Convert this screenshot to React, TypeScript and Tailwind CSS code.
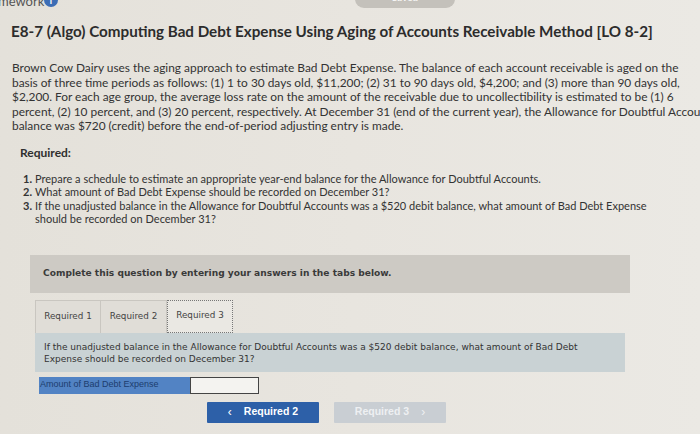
export default function App() {
  return (
    <div className="w-[700px] h-[434px] overflow-hidden bg-gradient-to-r from-[#e4e1da] via-[#e8e5df] to-[#ebe9e4] text-[#2f2f2f] font-['Lato',sans-serif]">
      {/* cut-off top bar */}
      <div className="relative h-[10px] overflow-hidden">
        <span className="absolute left-[-2px] top-[-8px] text-[13px] text-[#555]">mework</span>
        <span className="absolute left-[44px] top-[-7px] flex h-[14px] w-[14px] items-center justify-center rounded-full bg-[#3c6db5] text-[9px] font-bold leading-none text-white">i</span>
        <span className="absolute left-[355px] top-[-10px] h-[18px] w-[100px] rounded-full bg-[#c4c1bb] text-center text-[10px] leading-[14px] text-white">Saved</span>
      </div>

      <h1 className="ml-[11px] mt-[11px] whitespace-nowrap text-[15.2px] font-bold leading-[20px] text-[#2c2c2c]">
        E8-7 (Algo) Computing Bad Debt Expense Using Aging of Accounts Receivable Method [LO 8-2]
      </h1>

      <p className="ml-[12px] mt-[20px] whitespace-nowrap text-[11.9px] leading-[14.5px] text-[#333]">
        Brown Cow Dairy uses the aging approach to estimate Bad Debt Expense. The balance of each account receivable is aged on the
        <br />
        basis of three time periods as follows: (1) 1 to 30 days old, $11,200; (2) 31 to 90 days old, $4,200; and (3) more than 90 days old,
        <br />
        $2,200. For each age group, the average loss rate on the amount of the receivable due to uncollectibility is estimated to be (1) 6
        <br />
        percent, (2) 10 percent, and (3) 20 percent, respectively. At December 31 (end of the current year), the Allowance for Doubtful Accounts
        <br />
        balance was $720 (credit) before the end-of-period adjusting entry is made.
      </p>

      <div className="ml-[20px] mt-[11px] text-[12px] font-bold leading-[15px]">Required:</div>

      <ol className="ml-[23px] mt-[12px] whitespace-nowrap text-[11px] leading-[13.5px] text-[#333]">
        <li className="flex gap-[3px]">
          <span className="font-bold">1.</span>
          <span>Prepare a schedule to estimate an appropriate year-end balance for the Allowance for Doubtful Accounts.</span>
        </li>
        <li className="flex gap-[3px]">
          <span className="font-bold">2.</span>
          <span>What amount of Bad Debt Expense should be recorded on December 31?</span>
        </li>
        <li className="flex gap-[3px]">
          <span className="font-bold">3.</span>
          <span>
            If the unadjusted balance in the Allowance for Doubtful Accounts was a $520 debit balance, what amount of Bad Debt Expense
            <br />
            should be recorded on December 31?
          </span>
        </li>
      </ol>

      <div className="ml-[30px] mt-[29px] w-[600px]">
        <div className="flex h-[38px] items-center bg-[#cdcac4] pl-[13px] font-['DejaVu_Sans',sans-serif] text-[9.1px] font-bold text-[#3a3a3a]">
          Complete this question by entering your answers in the tabs below.
        </div>

        <div className="ml-[5px] mt-[7px] flex h-[33px] font-['DejaVu_Sans',sans-serif] text-[8.8px] text-[#444]">
          <div className="flex w-[66px] items-center justify-center border border-b-0 border-[#c9c6c0] bg-[#e0ddd7]">Required 1</div>
          <div className="flex w-[66px] items-center justify-center border border-b-0 border-l-0 border-[#c9c6c0] bg-[#e0ddd7]">Required 2</div>
          <div className="flex w-[66px] items-center justify-center border border-dotted border-[#777] bg-[#eae8e3]">Required 3</div>
        </div>

        <div className="ml-[5px] w-[590px] whitespace-nowrap bg-[#c9d2d4] px-[9px] pb-[6px] pt-[8px] font-['DejaVu_Sans',sans-serif] text-[9px] leading-[12.5px] text-[#333]">
          If the unadjusted balance in the Allowance for Doubtful Accounts was a $520 debit balance, what amount of Bad Debt
          <br />
          Expense should be recorded on December 31?
        </div>

        <div className="ml-[9px] mt-[5px] flex h-[17px]">
          <div className="flex w-[151px] items-center bg-[#5283c4] pl-[1px] font-['Liberation_Sans',sans-serif] text-[9px] text-[#1d3d6e]">
            Amount of Bad Debt Expense
          </div>
          <div className="w-[69px] border border-[#444] bg-[#f4f3f0]" />
        </div>

        <div className="ml-[177px] mt-[8px] flex gap-[15px] font-['Liberation_Sans',sans-serif] text-[10.5px] font-bold">
          <div className="flex h-[21px] w-[112px] items-center justify-center gap-[12px] rounded-[1px] bg-[#2d60a8] text-white">
            <span className="text-[12px] font-normal">&lsaquo;</span>
            <span>Required 2</span>
          </div>
          <div className="flex h-[21px] w-[112px] items-center justify-center gap-[12px] rounded-[1px] bg-[#c9ced3] text-[#eef0f2]">
            <span>Required 3</span>
            <span className="text-[12px] font-normal">&rsaquo;</span>
          </div>
        </div>
      </div>
    </div>
  );
}
